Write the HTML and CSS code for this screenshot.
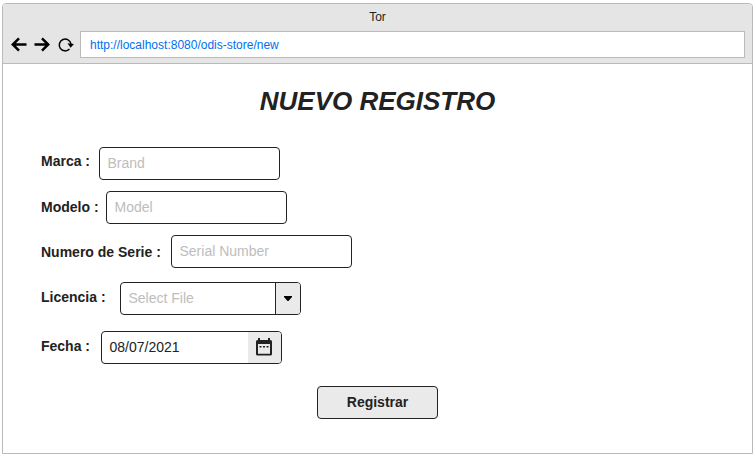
FILE: index.html
```html
<!DOCTYPE html>
<html lang="es">
<head>
<meta charset="utf-8">
<title>Tor</title>
<link rel="stylesheet" href="styles.css">
</head>
<body>
<div class="window">
  <header class="chrome">
    <div class="window-title">Tor</div>
    <div class="toolbar">
      <svg class="nav-icons" width="66" height="18" viewBox="0 0 66 18" fill="none" stroke="#000">
        <path d="M2.700 8.500H16.500M9 2.300L2.800 8.500L9 14.700" stroke-width="2.500"/>
        <path d="M24.500 8.500H38.300M32 2.300L38.200 8.500L32 14.700" stroke-width="2.500"/>
        <path d="M59.500 13A5.900 5.900 0 1 1 61 8" stroke-width="1.500"/>
        <path d="M57.500 7.200L64 8L60.600 11.800Z" fill="#000" stroke="none"/>
      </svg>
      <div class="address">http://localhost:8080/odis-store/new</div>
    </div>
  </header>
  <main class="page">
    <h1 class="heading">NUEVO REGISTRO</h1>
    <form class="form">
      <div class="row row-brand">
        <label class="label">Marca :</label>
        <div class="field placeholder">Brand</div>
      </div>
      <div class="row row-model">
        <label class="label">Modelo :</label>
        <div class="field placeholder">Model</div>
      </div>
      <div class="row row-serial">
        <label class="label">Numero de Serie :</label>
        <div class="field placeholder">Serial Number</div>
      </div>
      <div class="row row-license">
        <label class="label">Licencia :</label>
        <div class="field placeholder">
          <span class="value">Select File</span>
          <span class="addon addon-select"><svg width="8" height="5" viewBox="0 0 8 5"><path d="M0 0H8V1L4.500 5H3.500L0 1Z" fill="#000"/></svg></span>
        </div>
      </div>
      <div class="row row-date">
        <label class="label">Fecha :</label>
        <div class="field">
          <span class="value">08/07/2021</span>
          <span class="addon addon-date"><svg width="16" height="18" viewBox="0 0 16 18" fill="#222"><path fill-rule="evenodd" d="M2 0H4V2H12V0H14V2H14.500Q16 2 16 3.500V16Q16 17.500 14.500 17.500H1.500Q0 17.500 0 16V3.500Q0 2 1.500 2H2ZM2 6V15.700H14V6Z"/><path d="M3.500 8H5.500V9.500H3.500ZM7 8H9V9.500H7ZM10.500 8H12.500V9.500H10.500Z"/></svg></span>
        </div>
      </div>
      <button class="submit" type="button">Registrar</button>
    </form>
  </main>
</div>
</body>
</html>
```

FILE: styles.css
```css
* {
  box-sizing: border-box;
}

body {
  margin: 0;
  padding: 3px 0 0 2px;
  background: #fff;
  color: #222;
  font-family: "Liberation Sans", Arial, sans-serif;
  font-size: 14px;
}

.window {
  width: 751px;
  height: 451px;
  border: 1px solid #bababa;
  border-radius: 4px 4px 0 0;
  overflow: hidden;
}

.chrome {
  height: 60px;
  background: #e5e5e5;
  border-bottom: 1px solid #bababa;
}

.window-title {
  height: 27px;
  line-height: 27px;
  font-size: 12px;
  text-align: center;
}

.toolbar {
  display: flex;
  align-items: center;
  padding: 0 7px;
}

.nav-icons {
  margin-right: 4px;
  flex: none;
}

.address {
  flex: 1;
  height: 27px;
  padding-left: 9px;
  border: 1px solid #bababa;
  background: #fff;
  color: #0070ee;
  font-size: 12px;
  line-height: 26px;
}

.heading {
  margin: 21px 0 0;
  font-size: 26px;
  font-style: italic;
  font-weight: bold;
  line-height: 32px;
  text-align: center;
}

.form {
  display: flex;
  flex-direction: column;
  padding: 30px 0 0 38px;
}

.row {
  display: flex;
  height: 33px;
}

.label {
  font-weight: bold;
  line-height: 29px;
  white-space: nowrap;
}

.field {
  display: flex;
  justify-content: space-between;
  width: 181px;
  height: 33px;
  padding-left: 7.5px;
  border: 1px solid #222;
  border-radius: 4px;
  line-height: 31px;
  overflow: hidden;
}

.placeholder {
  color: #bdbdbd;
}

.row-brand .label { width: 58px; }
.row-model { margin-top: 11px; }
.row-model .label { width: 65px; line-height: 33px; }
.row-serial { margin-top: 11px; }
.row-serial .label { width: 130px; line-height: 35px; }
.row-license { margin-top: 14px; }
.row-license .label { width: 79px; line-height: 31px; }
.row-date { margin-top: 16px; }
.row-date .label { width: 60px; line-height: 31px; }

.addon {
  display: flex;
  align-items: center;
  justify-content: center;
  background: #eaeaea;
}

.addon-select {
  width: 25px;
  border-left: 1px solid #222;
}

.addon-date {
  width: 33px;
  padding: 0 1px 1px 0;
}

.submit {
  width: 121px;
  height: 33px;
  margin: 22px 0 0 276px;
  padding: 0;
  border: 1px solid #222;
  border-radius: 4px;
  background: #eaeaea;
  color: #222;
  font: bold 14px/31px "Liberation Sans", Arial, sans-serif;
}
```
